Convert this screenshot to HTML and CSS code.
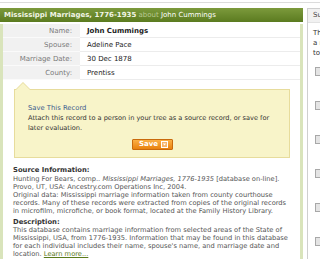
FILE: index.html
```html
<!DOCTYPE html>
<html lang="en">
<head>
    <meta charset="UTF-8">
    <meta name="viewport" content="width=device-width, initial-scale=1.0">
    <title>Mississippi Marriages, 1776-1935</title>
    <link rel="stylesheet" href="styles.css">
</head>
<body>
    <div class="topbar"></div>
    <div class="page">
        <div class="record">
            <div class="record-head">
                <span class="db-title">Mississippi Marriages, 1776-1935</span>
                <span class="about">about</span>
                <span class="person">John Cummings</span>
            </div>
            <div class="record-body">
                <table class="facts">
                    <tr><th>Name:</th><td class="strong">John Cummings</td></tr>
                    <tr><th>Spouse:</th><td>Adeline Pace</td></tr>
                    <tr><th>Marriage Date:</th><td>30 Dec 1878</td></tr>
                    <tr><th>County:</th><td>Prentiss</td></tr>
                </table>

                <div class="save-box">
                    <div class="save-title">Save This Record</div>
                    <p>Attach this record to a person in your tree as a source record, or save for later evaluation.</p>
                    <div class="save-actions">
                        <button class="save-btn">Save
                            <svg width="7" height="7" viewBox="0 0 7 7"><rect x="0.5" y="0.5" width="6" height="6" fill="#f6b46a" stroke="#fff"/><path d="M1.8 2.6 L5.2 2.6 L3.5 4.6 Z" fill="#fff"/></svg>
                        </button>
                    </div>
                </div>

                <div class="source">
                    <h4>Source Information:</h4>
                    <p>Hunting For Bears, comp.. <i>Mississippi Marriages, 1776-1935</i> [database on-line]. Provo, UT, USA: Ancestry.com Operations Inc, 2004.<br>
                    Original data: Mississippi marriage information taken from county courthouse records. Many of these records were extracted from copies of the original records in microfilm, microfiche, or book format, located at the Family History Library.</p>
                    <h4>Description:</h4>
                    <p>This database contains marriage information from selected areas of the State of Mississippi, USA, from 1776-1935. Information that may be found in this database for each individual includes their name, spouse's name, and marriage date and location. <a href="#">Learn more...</a></p>
                </div>
            </div>
        </div>

        <div class="side">
            <div class="side-head">Suggested Records</div>
            <div class="side-body">
                <p>These records may<br>a match for John<br>to your tree.</p>
                <ul class="doc-list">
                    <li><span class="doc"></span></li>
                    <li><span class="doc"></span></li>
                    <li><span class="doc"></span></li>
                    <li><span class="doc"></span></li>
                    <li><span class="doc"></span></li>
                    <li><span class="doc"></span></li>
                </ul>
            </div>
        </div>
    </div>
</body>
</html>
```

FILE: styles.css
```css
body {
    margin: 0;
    background: #fff;
    font-family: "DejaVu Sans", Verdana, sans-serif;
    color: #333;
    overflow: hidden;
}

.topbar {
    height: 2px;
    border-bottom: 1px solid #dcdcdc;
}

.page {
    display: flex;
    gap: 4px;
    margin-top: 5px;
}

.record {
    width: 303px;
    flex: none;
}

.record-head {
    height: 14px;
    line-height: 14px;
    padding-left: 4px;
    background: linear-gradient(#7c9a3c, #5b7b20);
    font-size: 7px;
    color: #fff;
    white-space: nowrap;
}

.db-title {
    font-weight: bold;
    color: #f2f5e6;
}

.about {
    color: #b9c991;
}

.record-body {
    border-left: 3px solid #d9e4bb;
    border-right: 3px solid #d9e4bb;
    padding-bottom: 20px;
}

.facts {
    width: 100%;
    border-collapse: collapse;
    font-size: 7px;
    margin-top: 2px;
}

.facts th {
    width: 69px;
    padding: 0 8px 0 0;
    height: 13px;
    text-align: right;
    font-weight: normal;
    color: #7a7a7a;
    background: #f1f1f1;
    border-bottom: 1px solid #fafafa;
}

.facts td {
    padding: 0 0 0 7px;
    color: #222;
    border-bottom: 1px solid #ececec;
}

.facts td.strong {
    font-weight: bold;
}

.save-box {
    position: relative;
    margin: 9px 10px 0 11px;
    padding: 13px 12px 8px 13px;
    background: #f8f4c9;
    border: 1px solid #e7dc9c;
    font-size: 6.6px;
    line-height: 10px;
    color: #333;
}

.save-box::before,
.save-box::after {
    content: "";
    position: absolute;
    border-style: solid;
    border-color: transparent;
}

.save-box::before {
    top: -8px;
    left: 0;
    border-width: 0 8px 8px 8px;
    border-bottom-color: #e7dc9c;
}

.save-box::after {
    top: -7px;
    left: 1px;
    border-width: 0 7px 7px 7px;
    border-bottom-color: #f8f4c9;
}

.save-title {
    color: #3b5b8e;
    font-size: 6.8px;
}

.save-box p {
    margin: 0;
}

.save-actions {
    text-align: center;
    margin-top: 6px;
    height: 10px;
}

.save-btn {
    display: inline-flex;
    align-items: center;
    gap: 3px;
    height: 11px;
    padding: 0 4px 0 6px;
    border: 1px solid #c96a0c;
    border-radius: 1px;
    background: linear-gradient(#fbb045, #e9820f);
    color: #fff;
    font-family: "DejaVu Sans", Verdana, sans-serif;
    font-size: 7px;
    font-weight: bold;
    line-height: 9px;
    vertical-align: top;
}

.source {
    width: 280px;
    margin: 8px 0 0 10px;
    font-size: 6.7px;
    line-height: 8px;
    color: #555;
}

.source h4 {
    margin: 0;
    font-size: 6.8px;
    line-height: 8.5px;
    color: #333;
}

.source p {
    margin: 0 0 3px;
}

.source a {
    color: #5a7a1a;
}

.side {
    flex: 1;
    border: 1px solid #cfcfcf;
    border-right: none;
    white-space: nowrap;
    overflow: hidden;
}

.side-head {
    height: 13px;
    line-height: 13px;
    padding-left: 5px;
    background: #f1f1f1;
    border-bottom: 1px solid #e2e2e2;
    font-size: 7px;
    color: #444;
}

.side-body {
    padding: 5px 0 0 5px;
    font-size: 7px;
    line-height: 10px;
    color: #333;
}

.side-body p {
    margin: 0;
}

.doc-list {
    list-style: none;
    margin: 9px 0 0;
    padding: 0 0 0 2px;
}

.doc-list li {
    height: 34px;
}

.doc {
    display: block;
    width: 6px;
    height: 7px;
    background: #e4e4e4;
    border: 1px solid #a8a8a8;
}
```
